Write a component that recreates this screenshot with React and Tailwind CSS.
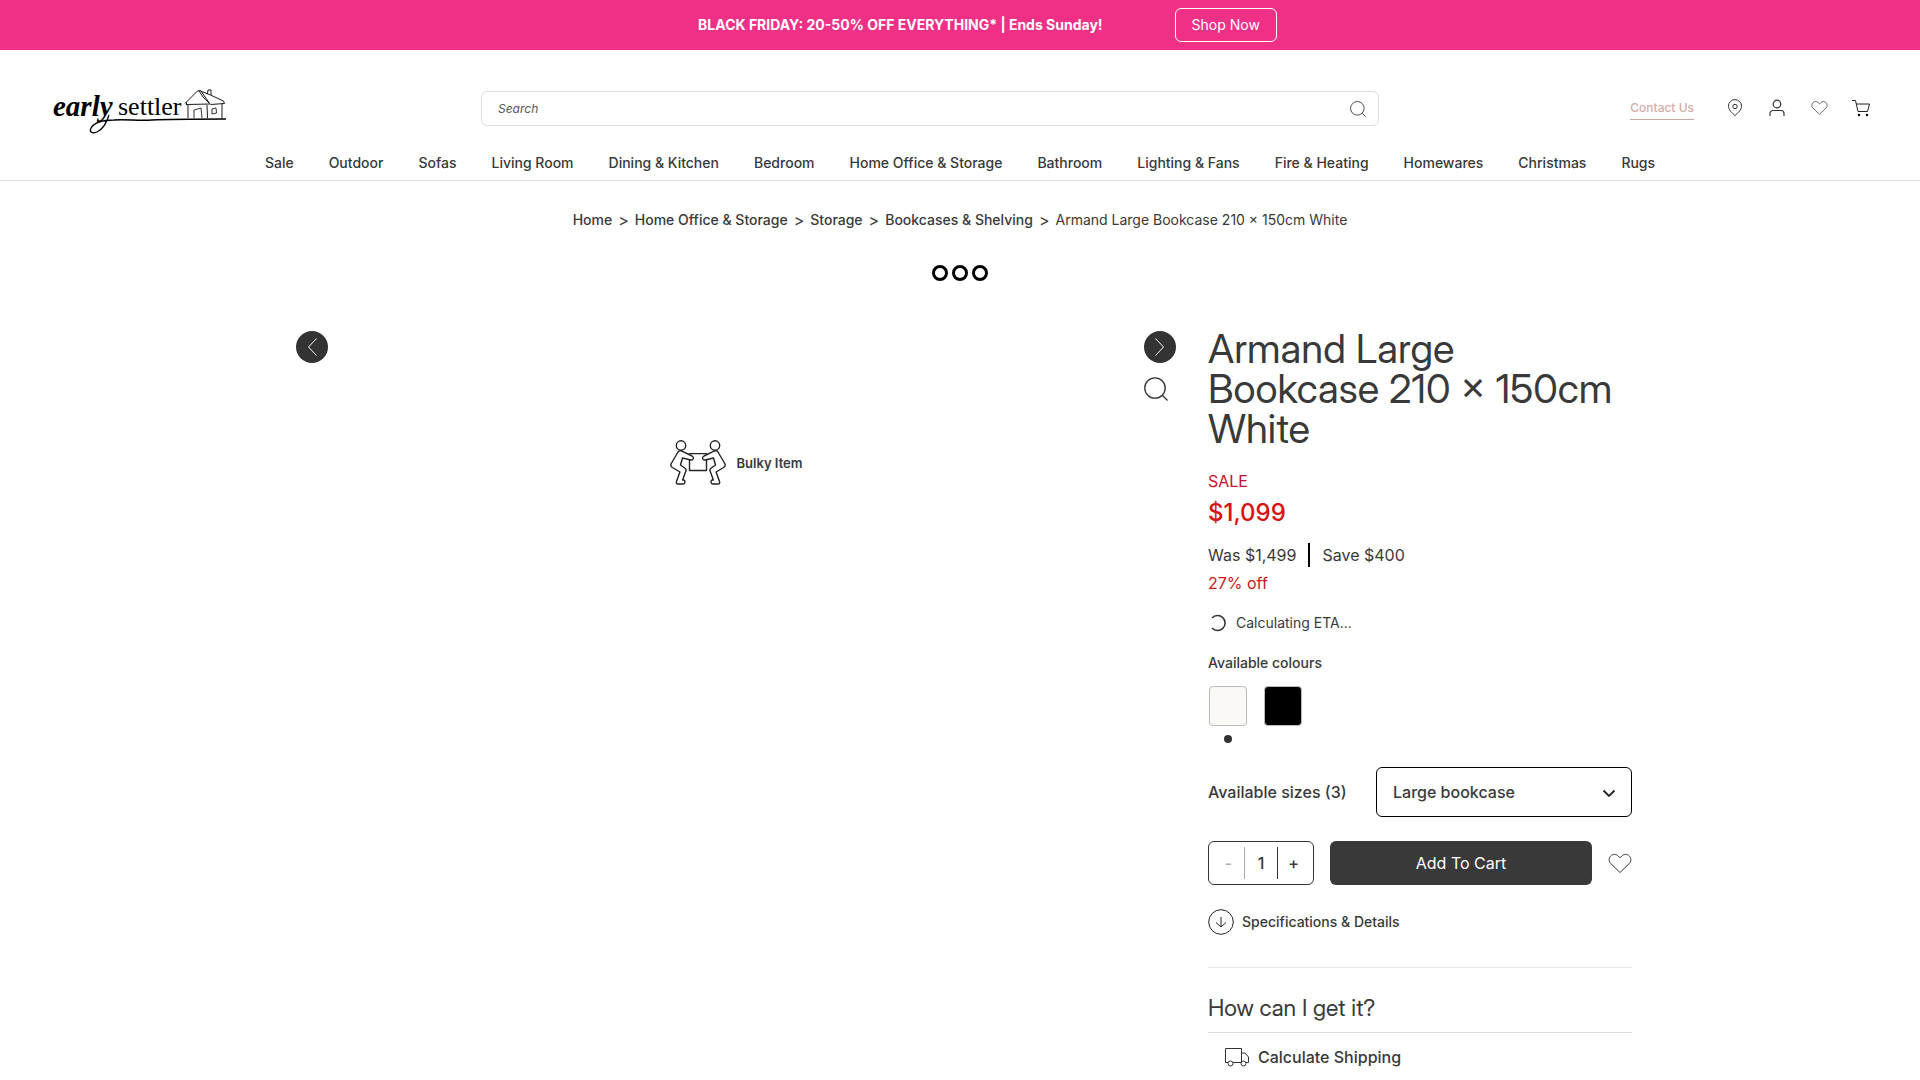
import { useState } from 'react';

const navItems = [
  'Sale',
  'Outdoor',
  'Sofas',
  'Living Room',
  'Dining & Kitchen',
  'Bedroom',
  'Home Office & Storage',
  'Bathroom',
  'Lighting & Fans',
  'Fire & Heating',
  'Homewares',
  'Christmas',
  'Rugs',
];

const crumbs = ['Home', 'Home Office & Storage', 'Storage', 'Bookcases & Shelving'];

const colours = [
  { name: 'White', swatch: 'bg-[#faf9f6]' },
  { name: 'Black', swatch: 'bg-black' },
];

const Logo = () => (
  <svg width="176" height="47" viewBox="0 -3 176 47" fill="none" stroke="#000" overflow="visible" role="img" aria-label="early settler">
    <text x="1" y="28" fill="#000" stroke="none" fontSize="29" fontStyle="italic" fontWeight="700" fontFamily="'Liberation Serif', serif">early</text>
    <text x="66" y="27" fill="#000" stroke="none" fontSize="26" fontFamily="'Liberation Serif', serif">settler</text>
    <path d="M57 27c-2 7-6 14-12 17-5 2-8 0-6-4 3-5 12-8 23-8 12-1 24 1 38 0 18-1 50-1 74-1" strokeWidth="1.300" />
    <path d="M133 15.500 145.500 3l3-.500L158 16l-24 .500M134 14l1 3M148.500 3l10 4 13 6 1 2.500-14 1M147 3l4 6 6 6M136 17v13M155 17l.500 13M170 16v14.500M155.500 6l.500-4h3v5" strokeWidth="0.900" />
    <path d="M142 30v-8l7-2 1 10M160 21l4-1 .500 5-4.500 1z" strokeWidth="0.800" />
  </svg>
);

const PinIcon = () => (
  <svg width="16" height="18" viewBox="0 0 16 18" fill="none" stroke="#333">
    <path d="M8 16.600C5 14 1.400 10.600 1.400 7.200a6.600 6.600 0 0 1 13.200 0c0 3.400-3.600 6.800-6.600 9.400z" />
    <circle cx="8" cy="7.500" r="2.200" />
  </svg>
);

const UserIcon = () => (
  <svg width="16" height="18" viewBox="0 0 16 18" fill="none" stroke="#333" strokeWidth="1.200">
    <circle cx="8" cy="5" r="3.800" />
    <path d="M1 17v-2.500a3 3 0 0 1 3-3h8a3 3 0 0 1 3 3V17" />
  </svg>
);

const HeartIcon = ({ className }) => (
  <svg className={className} viewBox="0 0 24 21" fill="none" stroke="#333">
    <path d="M12 19.500 2.800 10.600C.6 8.400.6 5 2.800 2.900c2-2 5.300-2 7.300 0L12 4.800l1.900-1.900c2-2 5.300-2 7.300 0 2.200 2.100 2.200 5.500 0 7.700z" />
  </svg>
);

const CartIcon = () => (
  <svg width="18" height="18" viewBox="0 0 18 18" fill="none" stroke="#222">
    <path d="M0 1.500h3.500L6 12.500h9.500L17.500 5H4.300" />
    <circle cx="7" cy="16" r="1.200" fill="#000" stroke="none" />
    <circle cx="15" cy="16" r="1.200" fill="#000" stroke="none" />
  </svg>
);

const SearchIcon = ({ className }) => (
  <svg className={className} viewBox="0 0 24 24" fill="none" stroke="#333" strokeWidth="1.300">
    <circle cx="11" cy="11" r="10.200" />
    <path d="m18.300 18.300 5.200 5.200" />
  </svg>
);

const Lifter = () => (
  <>
    <circle cx="11" cy="5.500" r="4.700" />
    <path d="M8 12c1-1.300 3-1.300 5-.3l9 4.300c2.300 1.200 1.500 4.500-1.200 4l-8.300-2-2 7 4.800 3.500c1 .7 1 1.600.6 2.600L12.600 40h1.200c1.700.4 1.500 4-.5 4H8c-1.500 0-2-1-1.500-2.500l3.400-9.500-7.500-4.500C.7 26.400.5 25.500 1 24z" />
  </>
);

const BulkyIcon = () => (
  <svg width="56" height="45" viewBox="0 0 56 45" fill="none" stroke="#222" strokeWidth="1.400" strokeLinejoin="round">
    <Lifter />
    <g transform="translate(56 0) scale(-1 1)">
      <Lifter />
    </g>
    <path d="M19.500 14.500V13.600h17v1M19.500 20v10.500h17V20" />
  </svg>
);

const TruckIcon = () => (
  <svg width="24" height="20" viewBox="0 0 24 20" fill="none" stroke="#333">
    <path d="M3 15.500H.5v-14h16v14H8M16.500 6h3.500l3.500 4v5.500H21" />
    <circle cx="5.500" cy="16.500" r="2.500" />
    <circle cx="18.500" cy="16.500" r="2.500" />
  </svg>
);

const Banner = () => (
  <div className="bg-[#ef3086] text-white text-sm h-[50px] flex items-center justify-center gap-[72px] pl-[55px]">
    <strong className="font-bold">BLACK FRIDAY: 20-50% OFF EVERYTHING* | Ends Sunday!</strong>
    <button type="button" className="border border-white rounded-md px-4 h-[34px]">Shop Now</button>
  </div>
);

const Header = () => (
  <header className="border-b border-[#dedede]">
    <div className="flex items-center pt-[35px] pl-[52px] pr-[50px]">
      <a href="#home" className="w-[429px] shrink-0"><Logo /></a>
      <form className="flex-1 h-[35px] border border-[#dedede] rounded-md flex items-center pl-4 pr-3" role="search">
        <input type="search" aria-label="Search" placeholder="Search" className="flex-1 text-xs italic outline-none placeholder:text-[#555]" />
        <button type="button" aria-label="Submit search"><SearchIcon className="w-4 h-4" /></button>
      </form>
      <div className="w-[491px] shrink-0 flex items-center justify-end gap-6 pb-[2px]">
        <a href="#contact" className="text-xs font-medium text-[#d5aca6] border-b border-[#c5a6a2] pb-[3px] mr-2 mt-[5px]">Contact Us</a>
        <a href="#stores" aria-label="Stores" className="w-[18px] flex justify-center"><PinIcon /></a>
        <a href="#account" aria-label="Account" className="w-[18px] flex justify-center"><UserIcon /></a>
        <a href="#wishlist" aria-label="Wishlist" className="w-[18px] flex justify-center"><HeartIcon className="w-[17px] h-4" /></a>
        <a href="#cart" aria-label="Cart" className="w-[18px] flex justify-center"><CartIcon /></a>
      </div>
    </div>
    <nav className="flex justify-center gap-[35px] pt-[21px] pb-[7px] text-sm font-medium">
      {navItems.map((item) => (
        <a key={item} href="#nav">{item}</a>
      ))}
    </nav>
  </header>
);

const Breadcrumbs = () => (
  <nav aria-label="Breadcrumb" className="flex justify-center items-center text-sm leading-5 mt-[29px]">
    {crumbs.map((crumb) => (
      <span key={crumb} className="flex items-center">
        <a href="#crumb" className="font-medium">{crumb}</a>
        <span className="text-base leading-5 px-[6px]">&gt;</span>
      </span>
    ))}
    <span>Armand Large Bookcase 210 × 150cm White</span>
  </nav>
);

const ArrowButton = ({ label, d }) => (
  <button type="button" aria-label={label} className="size-8 rounded-full bg-[#333] flex items-center justify-center">
    <svg width="20" height="20" viewBox="0 0 20 20" fill="none" stroke="#fff">
      <path d={d} />
    </svg>
  </button>
);

const Gallery = () => (
  <section className="w-2/3 px-2 pt-[2px]">
    <div className="flex justify-between">
      <ArrowButton label="Previous image" d="m14.500 1.500-8 8.500 8 8.500" />
      <div>
        <ArrowButton label="Next image" d="m5.500 1.500 8 8.500-8 8.500" />
        <button type="button" aria-label="Zoom" className="block mt-[14px]"><SearchIcon className="w-6 h-6" /></button>
      </div>
    </div>
    <div className="flex justify-center items-center gap-[11px] mt-[39px]">
      <BulkyIcon />
      <span className="text-[13px] font-semibold pt-[2px]">Bulky Item</span>
    </div>
  </section>
);

const ProductInfo = () => {
  const [selected, setSelected] = useState('White');
  const [qty, setQty] = useState(1);

  return (
    <section className="w-1/3 pl-6">
      <h1 className="font-['Inter_Display','Inter',sans-serif] text-[40px] leading-10">Armand Large Bookcase 210 × 150cm White</h1>
      <p className="text-[#c8102e] mt-5">SALE</p>
      <p className="text-2xl font-medium text-[#d81111] mt-1">$1,099</p>
      <div className="flex items-center mt-[14px]">
        <span>Was $1,499</span>
        <span className="w-[2px] h-6 bg-black mx-3" />
        <span>Save $400</span>
      </div>
      <p className="text-[#c91818] mt-1">27% off</p>
      <div className="flex items-center gap-[9px] text-sm mt-[18px] pl-[2px]">
        <svg width="17" height="18" viewBox="0 0 17 18" fill="none" stroke="#333" strokeWidth="1.500">
          <path d="M2 4a7.500 7.500 0 1 1 0 10" />
        </svg>
        <span>Calculating ETA...</span>
      </div>

      <p className="text-sm font-medium mt-5">Available colours</p>
      <div className="flex gap-[17px] mt-[13px] pl-px">
        {colours.map((colour) => (
          <div key={colour.name} className="flex flex-col items-center">
            <button type="button" aria-label={colour.name} onClick={() => setSelected(colour.name)} className={`w-[38px] h-10 rounded border border-[#bbb] ${colour.swatch}`} />
            {selected === colour.name && <span className="size-2 rounded-full bg-[#333] mt-[9px]" />}
          </div>
        ))}
      </div>

      <div className="flex items-center justify-between mt-6 font-medium">
        <label htmlFor="size">Available sizes (3)</label>
        <div className="relative w-64">
          <select id="size" className="appearance-none w-full h-[50px] border border-black rounded-md px-4">
            <option>Large bookcase</option>
            <option>Medium bookcase</option>
            <option>Small bookcase</option>
          </select>
          <svg className="absolute right-4 top-[18px] pointer-events-none" width="14" height="16" viewBox="0 0 14 16" fill="none" stroke="#222" strokeWidth="1.800">
            <path d="m1.500 5.500 5.500 5.500 5.500-5.500" />
          </svg>
        </div>
      </div>

      <div className="flex items-center gap-4 mt-6">
        <div className="w-[106px] h-11 border border-[#333] rounded-md flex items-center font-medium">
          <button type="button" disabled={qty === 1} onClick={() => setQty(qty - 1)} aria-label="Decrease" className="w-9 h-8 border-r border-[#333] disabled:border-[#aaa] disabled:text-[#aaa] pl-1">-</button>
          <span className="w-8 text-center">{qty}</span>
          <button type="button" onClick={() => setQty(qty + 1)} aria-label="Increase" className="flex-1 h-8 border-l border-[#333] pr-1">+</button>
        </div>
        <button type="button" className="flex-1 h-11 rounded-md bg-[#393939] text-white">Add To Cart</button>
        <button type="button" aria-label="Add to wishlist"><HeartIcon className="w-6 h-[21px]" /></button>
      </div>

      <a href="#specs" className="flex items-center gap-2 mt-6 text-sm font-medium">
        <svg width="26" height="26" viewBox="0 0 26 26" fill="none" stroke="#222">
          <circle cx="13" cy="13" r="12.300" />
          <path d="M13 8v10M8 13.500l5 4.500 5-4.500" />
        </svg>
        Specifications &amp; Details
      </a>

      <h2 className="font-['Inter_Display','Inter',sans-serif] text-[23px] leading-8 border-t border-[#e5e5e5] mt-8 pt-6 pb-2">How can I get it?</h2>
      <button type="button" className="w-full border-t border-[#dedede] flex items-center gap-[9px] pl-[17px] pt-3 font-medium">
        <TruckIcon />
        Calculate Shipping
      </button>
    </section>
  );
};

const App = () => (
  <div className="min-h-screen bg-white text-[#393939] font-[Inter,sans-serif]">
    <Banner />
    <Header />
    <Breadcrumbs />
    <div className="flex justify-center gap-1 mt-[35px]">
      <span className="size-4 rounded-full border-[3px] border-black" />
      <span className="size-4 rounded-full border-[3px] border-black" />
      <span className="size-4 rounded-full border-[3px] border-black" />
    </div>
    <main className="flex max-w-[1344px] mx-auto mt-12">
      <Gallery />
      <ProductInfo />
    </main>
  </div>
);

export default App;
